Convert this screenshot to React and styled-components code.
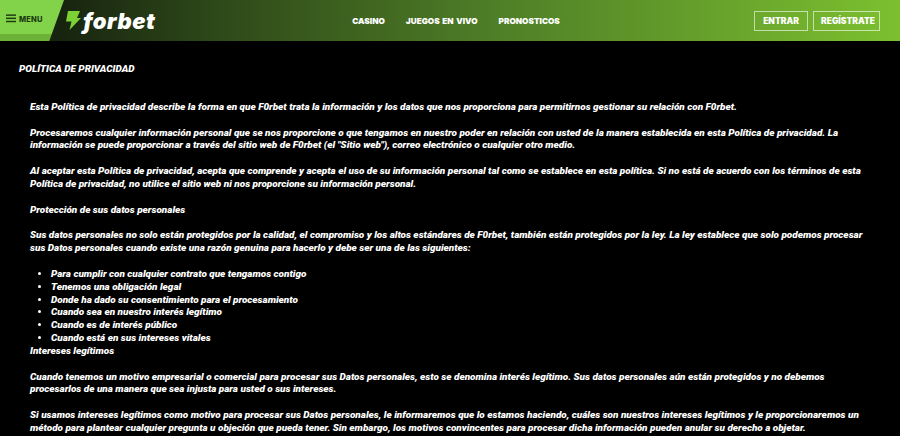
import React from "react";
import styled, { createGlobalStyle } from "styled-components";

const GlobalStyle = createGlobalStyle`
  html, body {
    margin: 0;
    padding: 0;
    background: #000;
    overflow: hidden;
  }
`;

const Page = styled.div`
  width: 900px;
  height: 436px;
  overflow: hidden;
  background: #000;
  color: #fff;
  font-family: Roboto, "Liberation Sans", sans-serif;
`;

const Header = styled.header`
  height: 41px;
  display: flex;
  align-items: center;
  background: linear-gradient(90deg, #17240f 60px, #2c4518 200px, #4f7f27 500px, #7cc02f 900px);
`;

const MenuTab = styled.div`
  width: 64px;
  height: 41px;
  display: flex;
  align-items: flex-start;
  padding: 14px 0 0 6px;
  box-sizing: border-box;
  gap: 3px;
  color: #1d3a10;
  background: linear-gradient(180deg, #82d34a 34px, #6cb238 34px);
  clip-path: polygon(0 0, 100% 0, 77% 100%, 0 100%);
`;

const MenuLabel = styled.span`
  font-family: Inter, sans-serif;
  font-size: 7.5px;
  font-weight: 800;
  line-height: 12px;
  letter-spacing: 0.2px;
`;

const Logo = styled.div`
  display: flex;
  align-items: center;
  margin-left: 2px;
  gap: 2px;
`;

const LogoText = styled.span`
  font-family: Inter, sans-serif;
  font-size: 22px;
  font-weight: 900;
  font-style: italic;
  line-height: 24px;
  letter-spacing: 0.5px;
`;

const Nav = styled.nav`
  display: flex;
  gap: 21px;
  margin-left: 197px;
`;

const NavLink = styled.a`
  font-family: Inter, sans-serif;
  font-size: 8.2px;
  font-weight: 900;
  word-spacing: 1px;
`;

const Actions = styled.div`
  display: flex;
  gap: 5px;
  margin-left: auto;
  margin-right: 20px;
`;

const Button = styled.button`
  height: 20px;
  padding: 0 7px;
  width: ${(p) => p.$w}px;
  border: 1px solid rgba(255, 255, 255, 0.6);
  background: transparent;
  color: #fff;
  font: 900 8.5px Inter, "Liberation Sans", sans-serif;
  white-space: nowrap;
`;

const Content = styled.main`
  padding: 22px 30px 0 19px;
  font-size: 9.95px;
  font-weight: 900;
  font-style: italic;
  line-height: 12.85px;
`;

const Title = styled.h1`
  margin: 0 0 25px;
  font-size: 9.95px;
  font-weight: 900;
  line-height: 12.85px;
`;

const Body = styled.div`
  padding-left: 11px;
`;

const Para = styled.p`
  margin: 0 0 12.85px;
`;

const Subhead = styled.p`
  margin: 0;
`;

const List = styled.ul`
  margin: 12.85px 0 0;
  padding-left: 21px;
`;

const MenuIcon = () => (
  <svg width="10" height="9" viewBox="0 0 11 9" fill="#1d3a10">
    <rect y="0" width="11" height="1.6" />
    <rect y="3.5" width="11" height="1.6" />
    <rect y="7" width="11" height="1.6" />
  </svg>
);

const Bolt = () => (
  <svg width="15" height="19" viewBox="0 0 15 19">
    <path d="M2 0 H14 L11 7 H15 L3.5 19 L5.5 10.5 H0 Z" fill="#7cd137" />
  </svg>
);

const items = [
  "Para cumplir con cualquier contrato que tengamos contigo",
  "Tenemos una obligación legal",
  "Donde ha dado su consentimiento para el procesamiento",
  "Cuando sea en nuestro interés legítimo",
  "Cuando es de interés público",
  "Cuando está en sus intereses vitales",
];

export default function App() {
  return (
    <Page>
      <GlobalStyle />
      <Header>
        <MenuTab>
          <MenuIcon />
          <MenuLabel>MENU</MenuLabel>
        </MenuTab>
        <Logo>
          <Bolt />
          <LogoText>forbet</LogoText>
        </Logo>
        <Nav>
          <NavLink>CASINO</NavLink>
          <NavLink>JUEGOS EN VIVO</NavLink>
          <NavLink>PRONOSTICOS</NavLink>
        </Nav>
        <Actions>
          <Button $w={54}>ENTRAR</Button>
          <Button $w={67}>REGÍSTRATE</Button>
        </Actions>
      </Header>
      <Content>
        <Title>POLÍTICA DE PRIVACIDAD</Title>
        <Body>
          <Para>Esta Política de privacidad describe la forma en que F0rbet trata la información y los datos que nos proporciona para permitirnos gestionar su relación con F0rbet.</Para>
          <Para>Procesaremos cualquier información personal que se nos proporcione o que tengamos en nuestro poder en relación con usted de la manera establecida en esta Política de privacidad. La información se puede proporcionar a través del sitio web de F0rbet (el "Sitio web"), correo electrónico o cualquier otro medio.</Para>
          <Para>Al aceptar esta Política de privacidad, acepta que comprende y acepta el uso de su información personal tal como se establece en esta política. Si no está de acuerdo con los términos de esta Política de privacidad, no utilice el sitio web ni nos proporcione su información personal.</Para>
          <Para>Protección de sus datos personales</Para>
          <Subhead>Sus datos personales no solo están protegidos por la calidad, el compromiso y los altos estándares de F0rbet, también están protegidos por la ley. La ley establece que solo podemos procesar sus Datos personales cuando existe una razón genuina para hacerlo y debe ser una de las siguientes:</Subhead>
          <List>
            {items.map((item) => (
              <li key={item}>{item}</li>
            ))}
          </List>
          <Para>Intereses legítimos</Para>
          <Para>Cuando tenemos un motivo empresarial o comercial para procesar sus Datos personales, esto se denomina interés legítimo. Sus datos personales aún están protegidos y no debemos procesarlos de una manera que sea injusta para usted o sus intereses.</Para>
          <Para>Si usamos intereses legítimos como motivo para procesar sus Datos personales, le informaremos que lo estamos haciendo, cuáles son nuestros intereses legítimos y le proporcionaremos un método para plantear cualquier pregunta u objeción que pueda tener. Sin embargo, los motivos convincentes para procesar dicha información pueden anular su derecho a objetar.</Para>
        </Body>
      </Content>
    </Page>
  );
}
